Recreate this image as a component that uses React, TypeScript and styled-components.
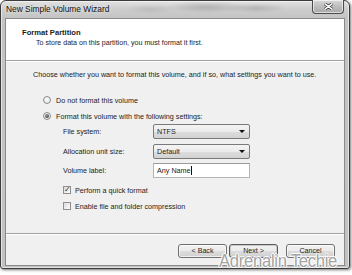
import styled, { createGlobalStyle } from 'styled-components';

const GlobalStyle = createGlobalStyle`
  html, body {
    margin: 0;
    padding: 0;
    background: #ffffff;
    width: 352px;
    height: 275px;
    overflow: hidden;
  }
  * { box-sizing: border-box; }
`;

const Page = styled.div`
  position: relative;
  width: 352px;
  height: 275px;
  font-family: "Liberation Sans", Arial, sans-serif;
  color: #1c1c1c;
`;

const Window = styled.div`
  width: 350px;
  height: 269px;
  border: 1px solid #3c3c3c;
  border-radius: 6px 6px 3px 3px;
  padding: 0 4px 2px 4px;
  display: flex;
  flex-direction: column;
  background:
    radial-gradient(ellipse 40px 6px at 205px 6px, rgba(120,120,120,0.35), transparent),
    radial-gradient(ellipse 30px 5px at 255px 7px, rgba(120,120,120,0.3), transparent),
    radial-gradient(ellipse 25px 5px at 150px 8px, rgba(140,140,140,0.25), transparent),
    linear-gradient(#e2e2e2, #cdcdcd 8px, #c4c4c4 17px, #c2c2c2);
  box-shadow: 1px 1px 3px rgba(0, 0, 0, 0.55), inset 0 0 0 1px rgba(255,255,255,0.55);
`;

const TitleBar = styled.div`
  height: 17px;
  display: flex;
  justify-content: space-between;
  align-items: flex-start;
  padding-left: 1px;
`;

const TitleText = styled.span`
  font-size: 8.4px;
  line-height: 17px;
  color: #111;
  text-shadow: 0 0 4px rgba(255, 255, 255, 0.9);
`;

const CloseButton = styled.div`
  width: 32px;
  height: 14px;
  margin-top: -1px;
  margin-right: 1px;
  border: 1px solid #4a4a4a;
  border-top: none;
  border-radius: 0 0 4px 4px;
  background: linear-gradient(#d8d8d8, #bdbdbd 50%, #a9a9a9);
  box-shadow: inset 0 0 0 1px rgba(255,255,255,0.6);
  display: flex;
  align-items: center;
  justify-content: center;
`;

const Client = styled.div`
  flex: 1;
  display: flex;
  flex-direction: column;
  border: 1px solid #8a8a8a;
  background: #f0f0f0;
`;

const Header = styled.div`
  height: 42px;
  background: #ffffff;
  border-bottom: 1px solid #a0a0a0;
  padding: 8px 0 0 16px;
`;

const HeaderTitle = styled.div`
  font-size: 7.6px;
  font-weight: bold;
  line-height: 11px;
`;

const HeaderSub = styled.div`
  font-size: 7.1px;
  line-height: 11px;
  padding-left: 14px;
`;

const Body = styled.div`
  flex: 1;
  border-top: 1px solid #ffffff;
  padding: 8px 0 0 27px;
  font-size: 7.2px;
`;

const Intro = styled.div`
  line-height: 10px;
  margin-bottom: 12px;
`;

const OptionRow = styled.label<{ $indent: number; $gap?: number }>`
  display: flex;
  align-items: center;
  height: 16px;
  padding-left: ${p => p.$indent}px;
  gap: ${p => p.$gap ?? 5}px;
`;

const Radio = styled.span<{ $checked?: boolean }>`
  width: 8px;
  height: 8px;
  border-radius: 50%;
  border: 1px solid #8e8e8e;
  background: radial-gradient(circle at 50% 40%, #ffffff, #dadada);
  display: flex;
  align-items: center;
  justify-content: center;
  &::after {
    content: '';
    display: ${p => (p.$checked ? 'block' : 'none')};
    width: 4px;
    height: 4px;
    border-radius: 50%;
    background: radial-gradient(circle at 40% 35%, #9a9a9a, #2a2a2a);
  }
`;

const Checkbox = styled.span`
  width: 8px;
  height: 8px;
  border: 1px solid #8e8e8e;
  background: linear-gradient(135deg, #dcdcdc, #fbfbfb);
  display: flex;
  align-items: center;
  justify-content: center;
  font-size: 8px;
  line-height: 8px;
  color: #333;
`;

const Fields = styled.div`
  display: grid;
  grid-template-columns: 90px 97px;
  grid-auto-rows: 15px;
  row-gap: 4.5px;
  padding-left: 30px;
  margin-bottom: 4px;
  align-items: center;
`;

const FieldLabel = styled.span`
  line-height: 15px;
`;

const Combo = styled.div`
  height: 15px;
  border: 1px solid #7a7a7a;
  border-radius: 2px;
  background: linear-gradient(#f4f4f4, #ebebeb 50%, #dddddd 51%, #d3d3d3);
  display: flex;
  align-items: center;
  justify-content: space-between;
  padding: 0 4px 0 3px;
  line-height: 13px;
`;

const Arrow = styled.span`
  width: 0;
  height: 0;
  border-left: 3px solid transparent;
  border-right: 3px solid transparent;
  border-top: 3px solid #111;
`;

const TextBox = styled.div`
  height: 15px;
  border: 1px solid #b4b4b4;
  border-top-color: #9a9a9a;
  background: #ffffff;
  padding-left: 3px;
  line-height: 13px;
  display: flex;
  align-items: center;
`;

const Caret = styled.span`
  width: 1px;
  height: 9px;
  background: #111;
  margin-left: 0.5px;
`;

const Footer = styled.div`
  height: 32px;
  border-top: 1px solid #a0a0a0;
  box-shadow: inset 0 1px 0 #ffffff;
  display: flex;
  justify-content: flex-end;
  padding: 10px 9px 0 0;
`;

const Button = styled.div<{ $gap: number; $default?: boolean }>`
  width: 49px;
  height: 14px;
  margin-right: ${p => p.$gap}px;
  border: 1px solid ${p => (p.$default ? '#5a5a5a' : '#707070')};
  border-radius: 3px;
  background: linear-gradient(#f2f2f2, #ebebeb 50%, #dddddd 51%, #cfcfcf);
  box-shadow: inset 0 0 0 1px ${p => (p.$default ? 'rgba(200,200,200,0.9)' : 'rgba(255,255,255,0.7)')};
  font-size: 7.1px;
  line-height: 12px;
  text-align: center;
`;

// watermark stamped over the bottom-right corner of the screenshot
const Watermark = styled.div`
  position: absolute;
  left: 219px;
  top: 251px;
  font-family: "Liberation Sans", sans-serif;
  font-size: 17.5px;
  line-height: 20px;
  letter-spacing: -0.3px;
  color: #a4a4a4;
  transform: scaleX(0.95);
  transform-origin: left top;
  text-shadow: 1px 0 0 #fff, -1px 0 0 #fff, 0 1px 0 #fff, 0 -1px 0 #fff;
  white-space: nowrap;
  pointer-events: none;
`;

export default function App() {
  return (
    <Page>
      <GlobalStyle />
      <Window>
        <TitleBar>
          <TitleText>New Simple Volume Wizard</TitleText>
          <CloseButton>
            <svg width="9" height="7" viewBox="0 0 9 7">
              <path d="M1 0.8 L8 6.2 M8 0.8 L1 6.2" stroke="#3a3a3a" strokeWidth="3" strokeLinecap="round" />
              <path d="M1 0.8 L8 6.2 M8 0.8 L1 6.2" stroke="#ffffff" strokeWidth="1.5" strokeLinecap="round" />
            </svg>
          </CloseButton>
        </TitleBar>
        <Client>
          <Header>
            <HeaderTitle>Format Partition</HeaderTitle>
            <HeaderSub>To store data on this partition, you must format it first.</HeaderSub>
          </Header>
          <Body>
            <Intro>Choose whether you want to format this volume, and if so, what settings you want to use.</Intro>
            <OptionRow $indent={10}>
              <Radio />
              Do not format this volume
            </OptionRow>
            <OptionRow $indent={10}>
              <Radio $checked />
              Format this volume with the following settings:
            </OptionRow>
            <Fields>
              <FieldLabel>File system:</FieldLabel>
              <Combo>NTFS<Arrow /></Combo>
              <FieldLabel>Allocation unit size:</FieldLabel>
              <Combo>Default<Arrow /></Combo>
              <FieldLabel>Volume label:</FieldLabel>
              <TextBox>Any Name<Caret /></TextBox>
            </Fields>
            <OptionRow $indent={30} $gap={4}>
              <Checkbox>✓</Checkbox>
              Perform a quick format
            </OptionRow>
            <OptionRow $indent={30} $gap={4}>
              <Checkbox />
              Enable file and folder compression
            </OptionRow>
          </Body>
          <Footer>
            <Button $gap={2}>&lt; Back</Button>
            <Button $gap={8} $default>Next &gt;</Button>
            <Button $gap={0}>Cancel</Button>
          </Footer>
        </Client>
      </Window>
      <Watermark>Adrenalin Techie</Watermark>
    </Page>
  );
}
